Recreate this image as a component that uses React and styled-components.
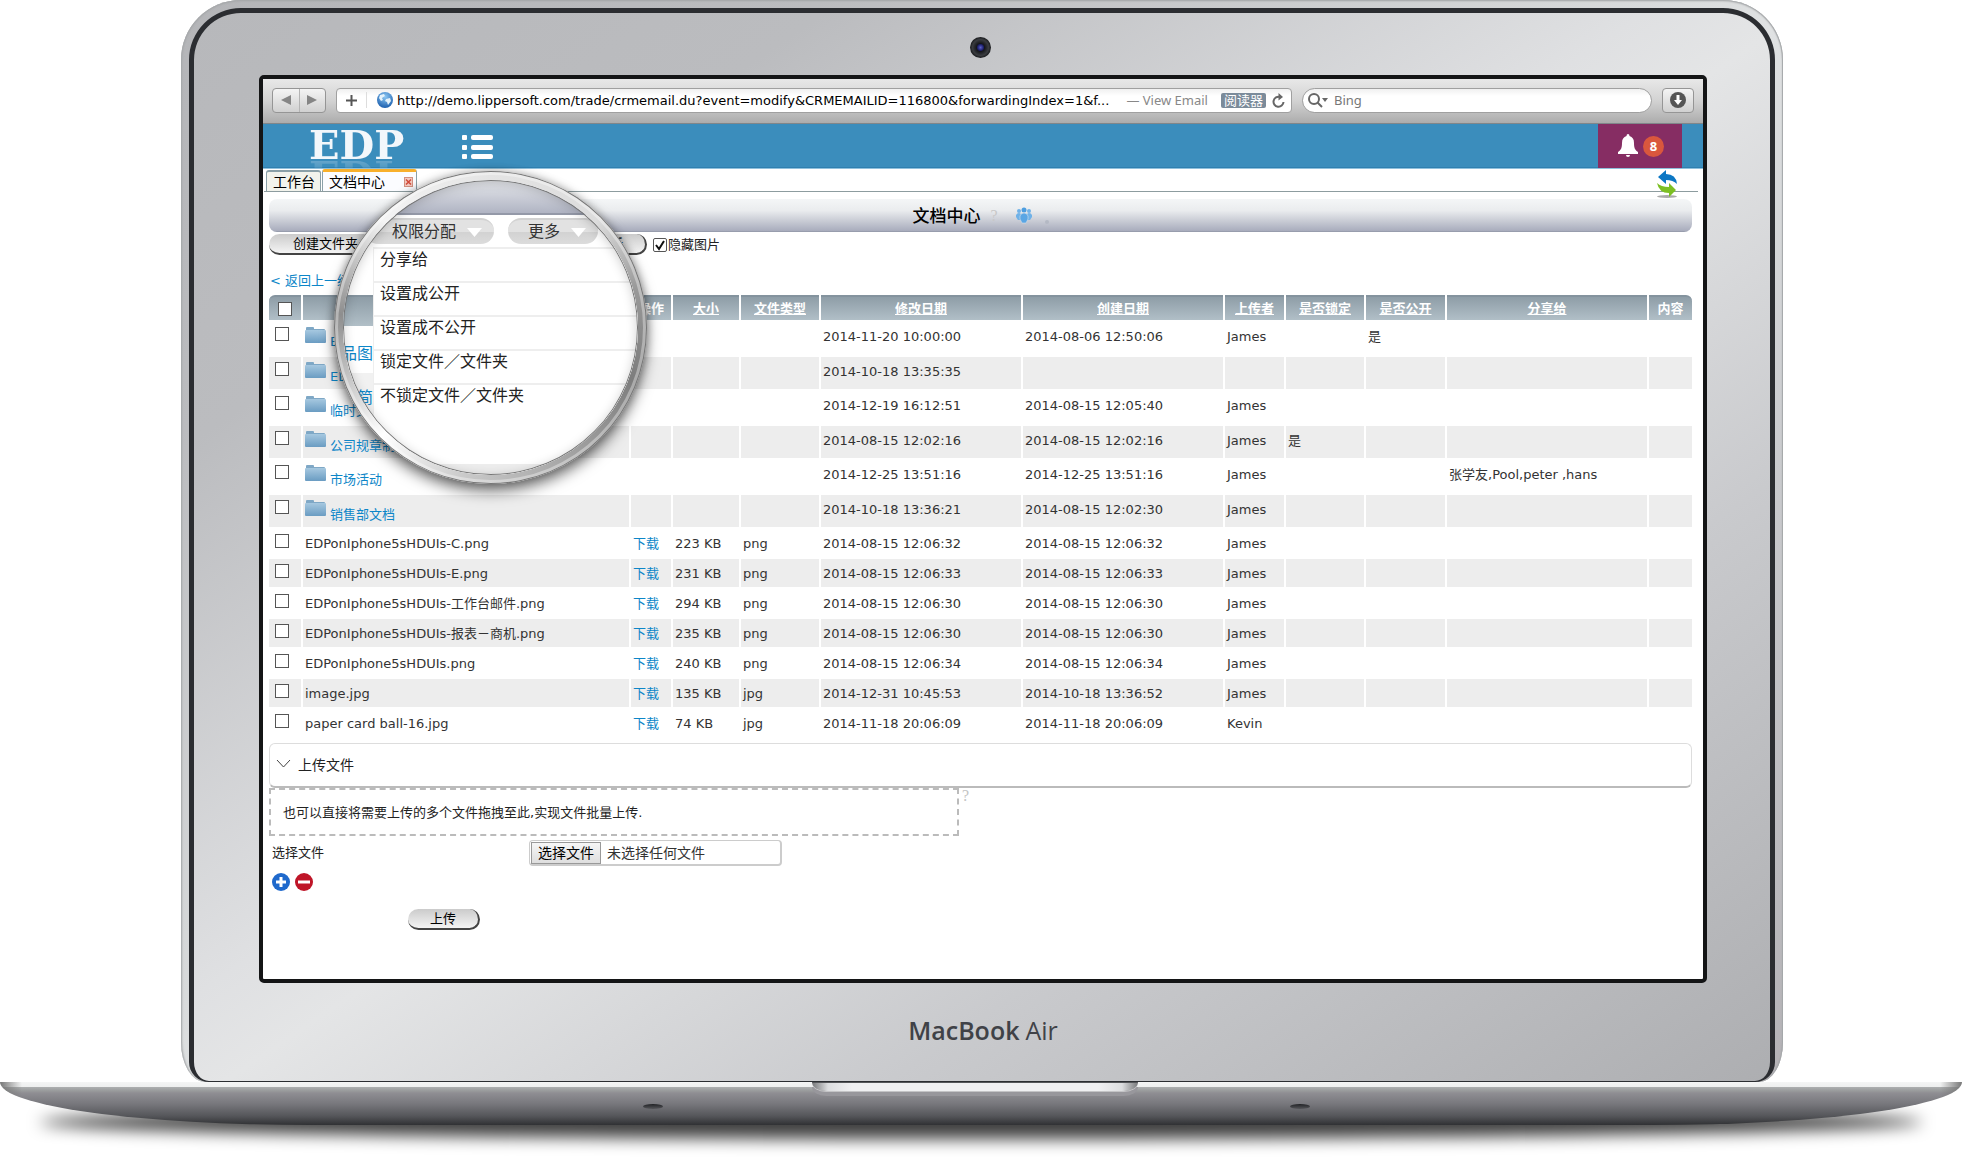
import React from 'react';
import styled, { createGlobalStyle, css } from 'styled-components';

const GlobalStyle = createGlobalStyle`
  * {
    box-sizing: border-box;
  }

  body {
    margin: 0;
    background: #fff;
    color: #333;
    font-family: 'DejaVu Sans', 'Noto Sans CJK SC', sans-serif;
    font-size: 13px;
    line-height: 16px;
  }

  button,
  input {
    font-family: inherit;
  }
`;

/* laptop */

const Laptop = styled.div`
  overflow: hidden;
  padding-bottom: 32px;
`;

const Lid = styled.div`
  margin: 0 179px 0 181px;
  padding: 8px 8px 0;
  border-radius: 60px 60px 24px 24px / 60px 60px 40px 40px;
  background: linear-gradient(to bottom right, #b4b5b8 0%, #bbbcbf 20%, #d8dadb 46%, #e0e2e3 51%, #c9cacd 72%, #b4b2b6 100%);
  box-shadow: inset 0 1px 2px #a5a7a9, inset 1px 0 2px #a5a8aa, inset -1px 0 1px #a5a8aa;
`;

const Bezel = styled.div`
  padding: 62px 63px 0 65px;
  border: 5px solid #2b2d31;
  border-bottom-width: 1px;
  border-radius: 52px 52px 20px 20px;
  background: linear-gradient(to bottom right, #b7b8bb 0%, #bbbcbf 20%, #dfe0e2 46%, #e4e5e6 51%, #c9cacd 72%, #adaeb1 100%);
`;

const Camera = styled.span`
  position: absolute;
  top: 37px;
  left: 50%;
  width: 21px;
  height: 21px;
  margin-left: -11px;
  border-radius: 50%;
  background: radial-gradient(circle, #5a60c8 0, #1d1f6a 3px, #15161b 4px, #3a3c40 8px, #1f2023 10px);
`;

const Screen = styled.main`
  position: relative;
  min-height: 908px;
  border: 4px solid #141516;
  border-radius: 5px;
  background: #fff;
`;

const Chin = styled.div`
  display: flex;
  align-items: center;
  justify-content: center;
  gap: 6px;
  height: 98px;
  padding-bottom: 4px;
  color: #404247;
  font-family: 'Open Sans', 'Noto Sans', sans-serif;
  font-size: 25px;
  line-height: 32px;

  strong {
    font-weight: 600;
  }
`;

const Base = styled.div`
  position: relative;
  z-index: 1;
  height: 43px;
  border-radius: 0 0 310px 310px / 0 0 43px 43px;
  background: linear-gradient(
    to bottom,
    #f4f5f5 0,
    #eeefef 5px,
    #aeb0b1 5px,
    #989a9b 9px,
    #8f8e93 11px,
    #77777c 22px,
    #55565a 34px,
    #303134 43px
  );
  overflow: hidden;

  &::before {
    content: '';
    position: absolute;
    inset: 0;
    background: linear-gradient(to right, #777 0, transparent 22px, transparent calc(100% - 22px), #777 100%);
  }
`;

const Notch = styled.div`
  position: relative;
  width: 326px;
  height: 9px;
  margin: 0 auto;
  left: -6px;
  border-radius: 0 0 14px 14px / 0 0 9px 9px;
  background: linear-gradient(to right, #77787a, #dcdddf 16px, #f0f0f2 40px, #f0f0f2 calc(100% - 40px), #dcdddf calc(100% - 16px), #77787a);
  border-top: 1px solid #55575a;
  box-shadow: 0 1px 0 #c4c4c6, 0 5px 0 #98979c;
`;

const Foot = styled.span`
  position: absolute;
  top: 22px;
  left: ${(p) => p.$at};
  width: 20px;
  height: 5px;
  border-radius: 50%;
  background: linear-gradient(#222326, #55565a);
`;

const FloorShadow = styled.div`
  height: 34px;
  margin: -20px 40px 0;
  border-radius: 50%;
  background: rgba(0, 0, 0, 0.75);
  filter: blur(8px);
`;

/* browser chrome */

const Toolbar = styled.header`
  display: flex;
  align-items: center;
  gap: 10px;
  height: 45px;
  padding: 0 9px 2px;
  border-bottom: 1px solid #80868a;
  background: linear-gradient(#e8e8e8, #d2d2d2 50%, #acacac);
`;

const chromeBox = css`
  height: 25px;
  border: 1px solid #959595;
  border-radius: 4px;
  background: linear-gradient(#f4f4f4, #d0d0d0);
`;

const NavButtons = styled.div`
  ${chromeBox}
  display: flex;
  width: 54px;

  button {
    flex: 1;
    padding: 0;
    border: 0;
    background: none;
    line-height: 0;
  }

  button + button {
    border-left: 1px solid #b4b4b4;
  }
`;

const AddressBar = styled.form`
  display: flex;
  flex: 1;
  align-items: center;
  height: 25px;
  padding: 0 6px 0 8px;
  border: 1px solid #a0a0a0;
  border-radius: 4px;
  background: linear-gradient(#f0f0f0, #fff 30%);
  min-width: 0;

  > button {
    display: flex;
    padding: 0;
    border: 0;
    background: none;
  }
`;

const Globe = styled.span`
  display: flex;
  margin-left: 8px;
  padding-left: 10px;
  border-left: 1px solid #ddd;
`;

const Url = styled.input`
  flex: 1;
  min-width: 0;
  height: 21px;
  padding: 0 0 0 4px;
  border: 0;
  background: none;
  color: #000;
  font-size: 13px;
  outline: 0;
`;

const PageName = styled.span`
  margin-right: 13px;
  color: #888;
  font-family: 'Noto Sans', sans-serif;
  font-size: 13px;
  white-space: nowrap;
`;

const Reader = styled.button`
  && {
    height: 15px;
    margin-right: 6px;
    padding: 0 3px;
    border-radius: 2px;
    background: #7b8b9a;
    color: #fff;
    font-size: 13px;
    line-height: 15px;
  }
`;

const Search = styled.label`
  display: flex;
  align-items: center;
  width: 350px;
  height: 25px;
  padding: 0 5px;
  border: 1px solid #a0a0a0;
  border-radius: 13px;
  background: linear-gradient(#f0f0f0, #fff 30%);

  input {
    flex: 1;
    min-width: 0;
    padding: 0 6px;
    border: 0;
    background: none;
    color: #777;
    font-family: 'Noto Sans', sans-serif;
    font-size: 13px;
    outline: 0;

    &::placeholder {
      color: #777;
    }
  }
`;

const Download = styled.button`
  ${chromeBox}
  display: flex;
  align-items: center;
  justify-content: center;
  width: 32px;
  padding: 0;
`;

/* site header */

const SiteHeader = styled.div`
  display: flex;
  height: 45px;
  padding: 0 21px 0 46px;
  border-bottom: 1px solid #8fc0dc;
  background: linear-gradient(#3b8dbc 43px, #2f80b0 43px);
  overflow: hidden;
`;

const Logo = styled.a`
  height: 31px;
  margin-top: 5px;
  color: #f3f7fb;
  font-family: 'DejaVu Serif', serif;
  font-size: 40px;
  font-weight: bold;
  line-height: 31px;
  text-decoration: none;
  -webkit-box-reflect: below 0 linear-gradient(transparent 55%, rgba(255, 255, 255, 0.25));
`;

const MenuButton = styled.button`
  align-self: flex-start;
  margin: 11px auto 0 58px;
  padding: 0;
  border: 0;
  background: none;
  line-height: 0;
`;

const Alerts = styled.button`
  display: flex;
  align-items: center;
  gap: 5px;
  width: 84px;
  padding: 0 0 0 20px;
  border: 0;
  background: #862d63;
`;

const Badge = styled.span`
  width: 21px;
  height: 21px;
  border-radius: 50%;
  background: #d9573d;
  color: #fff;
  font-family: 'Open Sans', sans-serif;
  font-size: 13px;
  font-weight: bold;
  line-height: 20px;
  text-align: center;
`;

const TabBar = styled.nav`
  display: flex;
  align-items: flex-end;
  gap: 1px;
  height: 23px;
  margin: 0 5px 0 1px;
  padding: 0 20px 0 2px;
  border-bottom: 1px solid #8d9c9f;
`;

const Tab = styled.a`
  display: flex;
  align-items: center;
  justify-content: space-between;
  width: ${(p) => (p.$active ? 95 : 55)}px;
  height: ${(p) => (p.$active ? 22 : 21)}px;
  padding: 0 ${(p) => (p.$active ? 3 : 6)}px 0 6px;
  border: 1px solid #8aa0a8;
  border-top: ${(p) => (p.$active ? '3px solid #f8b02c' : '2px solid #8aa0a8')};
  border-bottom: 0;
  border-radius: 3px 3px 0 0;
  background: ${(p) => (p.$active ? '#fbfcff' : '#f2f3ec')};
  color: #000;
  font-size: 14px;
  text-decoration: none;
  white-space: nowrap;
`;

const RefreshLink = styled.button`
  z-index: 1;
  height: 28px;
  margin: 0 0 -7px auto;
  padding: 0;
  border: 0;
  background: none;
`;

/* document page */

const Page = styled.section`
  padding: 7px 11px 0 6px;
`;

const TitleBar = styled.div`
  display: flex;
  align-items: center;
  justify-content: center;
  height: 33px;
  border-radius: 8px;
  background: linear-gradient(#f4f6f7, #eaecee 35%, #a9adbd 96%, #8d93a3);

  h1 {
    margin: 0;
    color: #000;
    font-size: 17px;
    font-weight: 500;
    line-height: 24px;
  }
`;

const Hint = styled.span`
  margin: 0 17px 0 10px;
  color: #c8c8c8;
  font-family: 'Liberation Serif', serif;
  font-size: 16px;
`;

const Dot = styled.i`
  width: 4px;
  height: 4px;
  margin: 12px 0 0 12px;
  border-radius: 50%;
  background: #b4b9c4;
`;

const Actions = styled.div`
  display: flex;
  align-items: center;
  height: 25px;
`;

const ActionGroup = styled.div`
  display: flex;
  justify-content: space-between;
  width: 378px;
  margin-right: 6px;
`;

const Pill = styled.button`
  height: 21px;
  padding: 0 ${(p) => (p.$wide ? 24 : 22)}px;
  border: 1px solid #b8b8b8;
  border-width: 0 2px 2px 0;
  border-color: #444;
  border-radius: 11px;
  background: linear-gradient(#cbcbcb, #f4f4f4);
  color: #000;
  font-size: 13px;
  line-height: 18px;
`;

const checkbox = css`
  appearance: none;
  display: block;
  width: 14px;
  height: 14px;
  margin: 0;
  border: 1px solid #555;
  background: #fff;
`;

const HideImages = styled.label`
  display: flex;
  align-items: center;
  gap: 1px;
  color: #222;

  input {
    ${checkbox}
    border-radius: 2px;
  }

  input:checked {
    background: #fff
      url("data:image/svg+xml,%3Csvg xmlns='http://www.w3.org/2000/svg' viewBox='0 0 12 12'%3E%3Cpath d='M2 6l3 4 5-8' fill='none' stroke='%23111' stroke-width='2'/%3E%3C/svg%3E")
      center / 12px no-repeat;
  }
`;

const BackLink = styled.a`
  display: inline-block;
  margin: 16px 0 4px 1px;
  color: #0d86c8;
  text-decoration: none;
`;

const TableWrap = styled.div`
  margin: 0 -2px;
`;

const DocTable = styled.table`
  width: 100%;
  border-spacing: 2px;
  table-layout: fixed;
`;

const HeadCell = styled.th`
  height: 25px;
  padding: 0 2px;
  border-top: 2px solid #84939e;
  background: linear-gradient(#8e9da7, #b1bfc7);
  color: #fff;
  font-size: 13px;
  text-align: center;

  &:first-child {
    border-top-left-radius: 6px;
  }

  &:last-child {
    border-top-right-radius: 6px;
  }

  input {
    ${checkbox}
    margin: 0 auto;
  }

  a {
    color: inherit;
  }
`;

const Row = styled.tr`
  height: ${(p) => (p.$folder ? (p.$striped ? 32 : 33) : 28)}px;
  background: ${(p) => (p.$striped ? '#ededed' : '#fff')};

  td {
    padding: 7px 1px 0 2px;
    vertical-align: top;
    white-space: nowrap;
  }

  td:first-child {
    padding: 5px 6px 0;
  }

  input {
    ${checkbox}
  }

  a {
    color: #0d86c8;
    text-decoration: none;
  }
`;

const FolderName = styled.span`
  display: flex;
  gap: 4px;
  height: 24px;
  margin-top: -3px;

  a {
    align-self: flex-end;
  }
`;

const UploadPanel = styled.button`
  display: flex;
  align-items: center;
  gap: 7px;
  width: 100%;
  height: 45px;
  margin-top: 4px;
  padding: 0 6px 2px;
  border: 1px solid #ddd;
  border-bottom: 2px solid #bbb;
  border-radius: 6px;
  background: #fff;
  color: #222;
  font-size: 14px;
`;

const DropRow = styled.div`
  display: flex;
  gap: 3px;
`;

const DropZone = styled.div`
  width: 690px;
  height: 48px;
  padding: 15px 12px;
  border: 2px dashed #bbb;
  color: #222;
`;

const UploadHint = styled.span`
  color: #c4c4c4;
  font-family: 'Liberation Serif', serif;
  font-size: 16px;
`;

const FileRow = styled.div`
  display: flex;
  align-items: center;
  height: 34px;
  padding-left: 3px;

  > label:first-child {
    width: 257px;
    color: #222;
  }
`;

const FilePicker = styled.div`
  display: flex;
  align-items: center;
  gap: 6px;
  width: 253px;
  height: 26px;
  padding: 0 1px;
  border: 1px solid #ccc;
  border-width: 1px 2px 2px 1px;
  border-radius: 4px;
  font-size: 14px;

  input {
    position: absolute;
    width: 1px;
    height: 1px;
    opacity: 0;
  }

  label {
    height: 22px;
    padding: 0 6px;
    border: 1px solid #999;
    background: linear-gradient(#f6f6f6, #dedede);
    color: #000;
    line-height: 20px;
  }
`;

const RowTools = styled.div`
  display: flex;
  gap: 5px;
  padding: 3px;

  button {
    padding: 0;
    border: 0;
    background: none;
    line-height: 0;
  }
`;

const SubmitRow = styled.div`
  padding: 15px 0 0 139px;
`;

/* magnifier */

const Lens = styled.aside`
  position: absolute;
  top: 92px;
  left: 71px;
  width: 313px;
  height: 313px;
  padding: 9px;
  border-radius: 50%;
  background: conic-gradient(from -45deg, #f4f4f4 0deg, #e4e4e4 45deg, #dcdcdc 90deg, #999 120deg, #7d7d7d 155deg, #aaa 200deg, #c9c9c9 235deg, #fff 270deg, #8e8e8e 320deg, #f4f4f4 360deg);
  box-shadow: 0 8px 14px rgba(0, 0, 0, 0.5), 0 0 8px rgba(0, 0, 0, 0.3), inset 0 0 0 1px #777, inset 0 0 0 4px rgba(255, 255, 255, 0.35);
  font-size: 16px;
  line-height: 22px;
`;

const Glass = styled.div`
  position: relative;
  height: 100%;
  border-radius: 50%;
  background: #fff;
  overflow: hidden;

  &::after {
    content: '';
    position: absolute;
    inset: 0;
    border-radius: 50%;
    box-shadow: inset 0 0 0 1px #777, inset 0 2px 12px rgba(0, 0, 0, 0.22);
    pointer-events: none;
  }
`;

const GlassTitle = styled.div`
  height: 35px;
  border-bottom: 2px solid #9499a8;
  background: linear-gradient(#e6e8ec, #b0b4c3);
`;

const GlassButtons = styled.div`
  display: flex;
  gap: 14px;
  padding: 3px 0 3px 22px;
`;

const MenuToggle = styled.button`
  display: flex;
  align-items: center;
  gap: 11px;
  height: 26px;
  padding: 0 12px 0 ${(p) => (p.$wide ? 27 : 20)}px;
  border: 0;
  border-top: 2px solid #d2d2d2;
  border-radius: 13px;
  background: linear-gradient(#e2e2e2 50%, #d2d2d2 50%, #dcdcdc);
  color: #333;
  font-size: 16px;
  line-height: 24px;
  white-space: nowrap;
`;

const GlassBody = styled.div`
  display: flex;
`;

const Underlay = styled.div`
  width: 30px;
  flex: none;
  overflow: hidden;
  color: #0d86c8;
`;

const UnderHead = styled.div`
  height: 31px;
  margin-top: 48px;
  border-top: 2px solid #84939e;
  background: linear-gradient(#8e9da7, #b1bfc7);
`;

const UnderRow = styled.div`
  display: flex;
  align-items: center;
  justify-content: flex-end;
  height: 47px;
  padding-top: ${(p) => (p.$striped ? 2 : 8)}px;
  background: ${(p) => (p.$striped ? '#f1f1f1' : '#fff')};
  white-space: nowrap;
`;

const Menu = styled.ul`
  flex: 1;
  margin: 0;
  padding: 0;
  border: 2px solid #eee;
  border-width: 2px 0 0 1px;
  list-style: none;
  background: #fff;

  li {
    height: 34px;
    padding-left: 6px;
    color: #222;
  }

  li:first-child {
    height: 32px;
  }

  li + li {
    border-top: 2px solid #eee;
  }
`;

const GlassFoot = styled.div`
  height: 30px;
  margin-top: 44px;
  background: #ededed;
`;

const FolderIcon = () => (
  <svg width="21" height="18" viewBox="0 0 21 18" aria-hidden="true">
    <defs>
      <linearGradient id="folder" x1="0" y1="0" x2="0" y2="1">
        <stop offset="0" stopColor="#a6c8e0" />
        <stop offset="1" stopColor="#6a9cc2" />
      </linearGradient>
    </defs>
    <path d="M1 4V2q0-1 1-1h6q1 0 1 1v1h10q1 0 1 1v3H1z" fill="#7fa8c6" />
    <rect x="0" y="4" width="21" height="13" rx="1" fill="url(#folder)" />
  </svg>
);

const ListIcon = () => (
  <svg width="31" height="26" viewBox="0 0 31 26" fill="#fff" aria-hidden="true">
    {[0, 10, 19].map((y) => (
      <g key={y}>
        <rect x="0" y={y} width="5" height="5" rx="1" />
        <rect x="9" y={y} width="22" height="5" rx="2" />
      </g>
    ))}
  </svg>
);

const BellIcon = () => (
  <svg width="20" height="24" viewBox="0 0 20 24" fill="#fff" aria-hidden="true">
    <path d="M10 0q1.500 0 1.500 2c3 1 4.500 3 4.500 7 0 5 1 7 4 9v2H0v-2c3-2 4-4 4-9 0-4 1.500-6 4.500-7Q8.500 0 10 0zM8 21h4q0 2-2 2t-2-2z" />
  </svg>
);

const GlobeIcon = () => (
  <svg width="16" height="16" viewBox="0 0 16 16" aria-hidden="true">
    <defs>
      <radialGradient id="globe" cx=".5" cy=".3" r=".7">
        <stop offset="0" stopColor="#8cc8f4" />
        <stop offset="1" stopColor="#1c5fae" />
      </radialGradient>
    </defs>
    <circle cx="8" cy="8" r="8" fill="url(#globe)" />
    <path d="M3 3l4-1 1 2-3 2 1 2-2 1-2-3zM9 7l4-1 1 3-3 4-1-3-2-1z" fill="#e4f2fb" />
  </svg>
);

const SyncIcon = () => (
  <svg width="22" height="28" viewBox="0 0 22 28" aria-hidden="true">
    <ellipse cx="11" cy="26.500" rx="10" ry="1.500" fill="#aaa" />
    <path d="M2 7l8-7v4q10 0 11 10-4-4-11-4v4z" fill="#0c77c4" />
    <path d="M20 20l-7 7v-4Q3 23 1 13q4 4 12 4v-4z" fill="#7cbf23" />
  </svg>
);

const PeopleIcon = () => (
  <svg width="18" height="17" viewBox="0 0 18 17" fill="#6fb2e8" aria-hidden="true">
    <circle cx="4" cy="4" r="2" />
    <circle cx="14" cy="4" r="2" />
    <path d="M1 10V8q1-2 3-2t2 2v5H3zM17 10V8q-1-2-3-2t-2 2v5h3z" />
    <circle cx="9" cy="3" r="2.500" fill="#4d9ee0" />
    <path d="M5 12V9q1-3 4-3t4 3v3l-2 4H7z" fill="#5aa6e4" stroke="#d5dfea" strokeWidth=".6" />
  </svg>
);

const CloseIcon = () => (
  <svg width="9" height="10" viewBox="0 0 9 10" aria-label="关闭">
    <rect x=".5" y=".5" width="8" height="9" fill="#f3c9c0" stroke="#d2907f" />
    <path d="M2 2.500l5 5m0-5l-5 5" stroke="#d14a3a" strokeWidth="1.500" />
  </svg>
);

const Triangle = ({ d, size = 10, fill = '#858585' }) => (
  <svg width={size} height={size} viewBox="0 0 10 10" aria-hidden="true">
    <path d={d} fill={fill} />
  </svg>
);

const RoundIcon = ({ fill, d }) => (
  <svg width="18" height="18" viewBox="0 0 18 18" aria-hidden="true">
    <circle cx="9" cy="9" r="9" fill={fill} />
    <path d={d} stroke="#fff" strokeWidth="3" />
  </svg>
);

const COLUMNS = [
  { key: 'op', label: '操作', width: 40 },
  { key: 'size', label: '大小', width: 66 },
  { key: 'type', label: '文件类型', width: 78 },
  { key: 'modified', label: '修改日期', width: 200 },
  { key: 'created', label: '创建日期', width: 200 },
  { key: 'owner', label: '上传者', width: 59 },
  { key: 'locked', label: '是否锁定', width: 78 },
  { key: 'open', label: '是否公开', width: 79 },
  { key: 'shared', label: '分享给', width: 200 },
  { key: 'content', label: '内容', width: 43 },
];

const ROWS = [
  { folder: true, name: 'EDP产品图片', modified: '2014-11-20 10:00:00', created: '2014-08-06 12:50:06', owner: 'James', open: '是' },
  { folder: true, name: 'EDP产品简介', modified: '2014-10-18 13:35:35' },
  { folder: true, name: '临时文件', modified: '2014-12-19 16:12:51', created: '2014-08-15 12:05:40', owner: 'James' },
  { folder: true, name: '公司规章制度', modified: '2014-08-15 12:02:16', created: '2014-08-15 12:02:16', owner: 'James', locked: '是' },
  { folder: true, name: '市场活动', modified: '2014-12-25 13:51:16', created: '2014-12-25 13:51:16', owner: 'James', shared: '张学友,Pool,peter ,hans' },
  { folder: true, name: '销售部文档', modified: '2014-10-18 13:36:21', created: '2014-08-15 12:02:30', owner: 'James' },
  { name: 'EDPonIphone5sHDUIs-C.png', size: '223 KB', type: 'png', modified: '2014-08-15 12:06:32', created: '2014-08-15 12:06:32', owner: 'James' },
  { name: 'EDPonIphone5sHDUIs-E.png', size: '231 KB', type: 'png', modified: '2014-08-15 12:06:33', created: '2014-08-15 12:06:33', owner: 'James' },
  { name: 'EDPonIphone5sHDUIs-工作台邮件.png', size: '294 KB', type: 'png', modified: '2014-08-15 12:06:30', created: '2014-08-15 12:06:30', owner: 'James' },
  { name: 'EDPonIphone5sHDUIs-报表－商机.png', size: '235 KB', type: 'png', modified: '2014-08-15 12:06:30', created: '2014-08-15 12:06:30', owner: 'James' },
  { name: 'EDPonIphone5sHDUIs.png', size: '240 KB', type: 'png', modified: '2014-08-15 12:06:34', created: '2014-08-15 12:06:34', owner: 'James' },
  { name: 'image.jpg', size: '135 KB', type: 'jpg', modified: '2014-12-31 10:45:53', created: '2014-10-18 13:36:52', owner: 'James' },
  { name: 'paper card ball-16.jpg', size: '74 KB', type: 'jpg', modified: '2014-11-18 20:06:09', created: '2014-11-18 20:06:09', owner: 'Kevin' },
];

const MENU_ITEMS = ['分享给', '设置成公开', '设置成不公开', '锁定文件／文件夹', '不锁定文件／文件夹'];

const BrowserBar = () => (
  <Toolbar>
    <NavButtons>
      <button type="button" aria-label="后退">
        <Triangle d="M0 5l10-5v10z" />
      </button>
      <button type="button" aria-label="前进">
        <Triangle d="M10 5L0 0v10z" />
      </button>
    </NavButtons>
    <AddressBar>
      <button type="button" aria-label="添加">
        <svg width="13" height="13" viewBox="0 0 13 13" stroke="#555" strokeWidth="2">
          <path d="M6.500 1v11M1 6.500h11" />
        </svg>
      </button>
      <Globe>
        <GlobeIcon />
      </Globe>
      <Url
        aria-label="地址"
        defaultValue="http://demo.lippersoft.com/trade/crmemail.du?event=modify&CRMEMAILID=116800&forwardingIndex=1&f..."
      />
      <PageName>— View Email</PageName>
      <Reader type="button">阅读器</Reader>
      <button type="button" aria-label="刷新">
        <svg width="13" height="15" viewBox="0 0 13 15" fill="none" stroke="#666" strokeWidth="2">
          <path d="M11.500 9A5 5 0 1 1 8 4" />
          <path d="M6.500 0l4.500 4-4.500 3.500z" fill="#666" stroke="none" />
        </svg>
      </button>
    </AddressBar>
    <Search>
      <svg width="20" height="15" viewBox="0 0 20 15" fill="none" stroke="#666" strokeWidth="2" aria-hidden="true">
        <circle cx="6" cy="6" r="5" />
        <path d="M9.500 9.500l4.500 4.500" />
        <path d="M14 5h6l-3 4z" fill="#666" stroke="none" />
      </svg>
      <input type="search" placeholder="Bing" aria-label="Bing" />
    </Search>
    <Download type="button" aria-label="下载">
      <svg width="16" height="16" viewBox="0 0 16 16">
        <circle cx="8" cy="8" r="8" fill="#555" />
        <path d="M6.500 3h3v5H12l-4 5-4-5h2.500z" fill="#fff" />
      </svg>
    </Download>
  </Toolbar>
);

const DocumentRow = ({ row, striped }) => (
  <Row $folder={row.folder} $striped={striped}>
    <td>
      <input type="checkbox" aria-label={row.name} />
    </td>
    <td>
      {row.folder ? (
        <FolderName>
          <FolderIcon />
          <a href="#folder">{row.name}</a>
        </FolderName>
      ) : (
        row.name
      )}
    </td>
    {COLUMNS.map(({ key }) => (
      <td key={key}>{key === 'op' && !row.folder ? <a href="#download">下载</a> : row[key]}</td>
    ))}
  </Row>
);

const Documents = () => (
  <DocTable>
    <colgroup>
      <col width="32" />
      <col />
      {COLUMNS.map(({ key, width }) => (
        <col key={key} width={width} />
      ))}
    </colgroup>
    <thead>
      <tr>
        <HeadCell>
          <input type="checkbox" aria-label="全选" />
        </HeadCell>
        <HeadCell>
          <a href="#name">名称</a>
        </HeadCell>
        {COLUMNS.map(({ key, label }) => (
          <HeadCell key={key}>
            {key === 'op' || key === 'content' ? label : <a href={`#${key}`}>{label}</a>}
          </HeadCell>
        ))}
      </tr>
    </thead>
    <tbody>
      {ROWS.map((row, i) => (
        <DocumentRow key={row.name} row={row} striped={i % 2 === 1} />
      ))}
    </tbody>
  </DocTable>
);

const Magnifier = () => (
  <Lens>
    <Glass>
      <GlassTitle />
      <GlassButtons>
        <MenuToggle type="button" $wide>
          权限分配
          <Triangle d="M0 2h10L5 8z" size={15} fill="#fff" />
        </MenuToggle>
        <MenuToggle type="button">
          更多
          <Triangle d="M0 2h10L5 8z" size={15} fill="#fff" />
        </MenuToggle>
      </GlassButtons>
      <GlassBody>
        <Underlay>
          <UnderHead />
          <UnderRow>品图</UnderRow>
          <UnderRow $striped>简</UnderRow>
        </Underlay>
        <Menu>
          {MENU_ITEMS.map((item) => (
            <li key={item}>{item}</li>
          ))}
        </Menu>
      </GlassBody>
      <GlassFoot />
    </Glass>
  </Lens>
);

const App = () => (
  <Laptop>
    <GlobalStyle />
    <Camera />
    <Lid>
      <Bezel>
        <Screen>
          <BrowserBar />
          <SiteHeader>
            <Logo href="#home">EDP</Logo>
            <MenuButton type="button" aria-label="菜单">
              <ListIcon />
            </MenuButton>
            <Alerts type="button">
              <BellIcon />
              <Badge>8</Badge>
            </Alerts>
          </SiteHeader>
          <TabBar>
            <Tab href="#desk">工作台</Tab>
            <Tab href="#docs" $active>
              文档中心
              <CloseIcon />
            </Tab>
            <RefreshLink type="button" aria-label="同步">
              <SyncIcon />
            </RefreshLink>
          </TabBar>
          <Page>
            <TitleBar>
              <h1>文档中心</h1>
              <Hint>?</Hint>
              <PeopleIcon />
              <Dot />
            </TitleBar>
            <Actions>
              <ActionGroup>
                <Pill type="button" $wide>
                  创建文件夹
                </Pill>
                <Pill type="button">刷新</Pill>
              </ActionGroup>
              <HideImages>
                <input type="checkbox" defaultChecked />
                隐藏图片
              </HideImages>
            </Actions>
            <BackLink href="#up">&lt; 返回上一级</BackLink>
            <TableWrap>
              <Documents />
            </TableWrap>
            <UploadPanel type="button">
              <svg width="15" height="10" viewBox="0 0 15 10" fill="none" stroke="#444" aria-hidden="true">
                <path d="M1 1l6.500 7L14 1" />
              </svg>
              上传文件
            </UploadPanel>
            <DropRow>
              <DropZone>也可以直接将需要上传的多个文件拖拽至此,实现文件批量上传.</DropZone>
              <UploadHint>?</UploadHint>
            </DropRow>
            <FileRow>
              <label htmlFor="upload">选择文件</label>
              <FilePicker>
                <input id="upload" type="file" />
                <label htmlFor="upload">选择文件</label>
                <span>未选择任何文件</span>
              </FilePicker>
            </FileRow>
            <RowTools>
              <button type="button" aria-label="增加">
                <RoundIcon fill="#1f69cc" d="M9 4v10M4 9h10" />
              </button>
              <button type="button" aria-label="移除">
                <RoundIcon fill="#bf1528" d="M3 9h12" />
              </button>
            </RowTools>
            <SubmitRow>
              <Pill type="button">上传</Pill>
            </SubmitRow>
          </Page>
          <Magnifier />
        </Screen>
        <Chin>
          <strong>MacBook</strong>
          <span>Air</span>
        </Chin>
      </Bezel>
    </Lid>
    <Base>
      <Notch />
      <Foot $at="calc(50% - 338px)" />
      <Foot $at="calc(50% + 309px)" />
    </Base>
    <FloorShadow />
  </Laptop>
);

export default App;
